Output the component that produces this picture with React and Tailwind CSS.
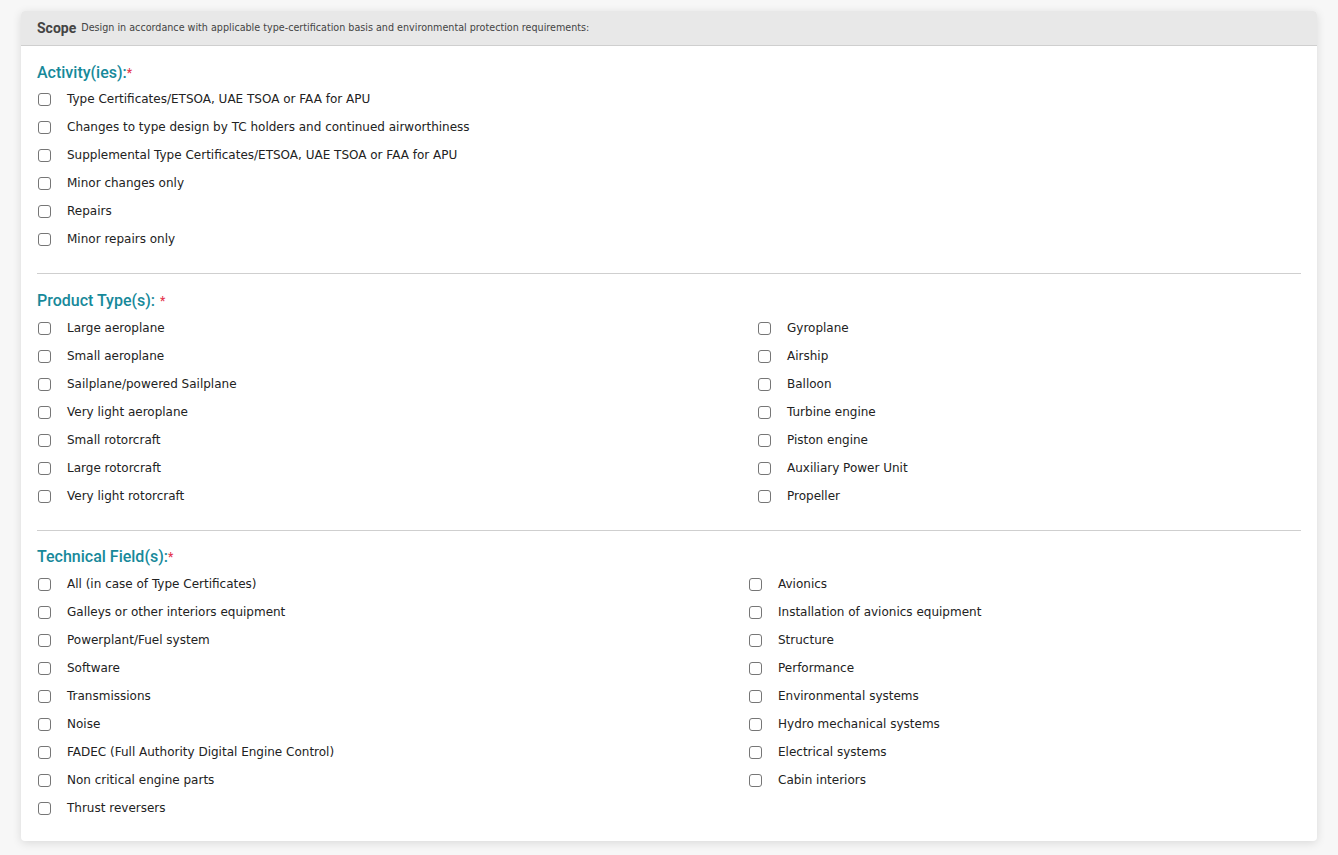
const activities = [
  "Type Certificates/ETSOA, UAE TSOA or FAA for APU",
  "Changes to type design by TC holders and continued airworthiness",
  "Supplemental Type Certificates/ETSOA, UAE TSOA or FAA for APU",
  "Minor changes only",
  "Repairs",
  "Minor repairs only",
];

const productLeft = [
  "Large aeroplane",
  "Small aeroplane",
  "Sailplane/powered Sailplane",
  "Very light aeroplane",
  "Small rotorcraft",
  "Large rotorcraft",
  "Very light rotorcraft",
];

const productRight = [
  "Gyroplane",
  "Airship",
  "Balloon",
  "Turbine engine",
  "Piston engine",
  "Auxiliary Power Unit",
  "Propeller",
];

const techLeft = [
  "All (in case of Type Certificates)",
  "Galleys or other interiors equipment",
  "Powerplant/Fuel system",
  "Software",
  "Transmissions",
  "Noise",
  "FADEC (Full Authority Digital Engine Control)",
  "Non critical engine parts",
  "Thrust reversers",
];

const techRight = [
  "Avionics",
  "Installation of avionics equipment",
  "Structure",
  "Performance",
  "Environmental systems",
  "Hydro mechanical systems",
  "Electrical systems",
  "Cabin interiors",
];

function Check({ label }) {
  return (
    <label className="flex items-center h-7 cursor-pointer">
      <span className="ml-[1px] w-[13px] h-[13px] border border-[#767676] rounded-[3px] bg-white shrink-0"></span>
      <span className="ml-[16px] text-[12px] text-[#222] font-['DejaVu_Sans',sans-serif]">
        {label}
      </span>
    </label>
  );
}

function Heading({ children, spaced }) {
  return (
    <h3 className="text-[16px] font-medium text-[#17899a] font-['Roboto',sans-serif] leading-none h-[14px] flex items-center">
      {children}
      <span className={"text-[#e53950] text-[12px] " + (spaced ? "ml-[5px]" : "")}>*</span>
    </h3>
  );
}

export default function App() {
  return (
    <div className="min-h-screen bg-[#f7f7f7] pt-[11px] px-[21px] font-['Roboto',sans-serif]">
      <div className="bg-white rounded-[4px] shadow-[0_2px_10px_rgba(0,0,0,0.12)] w-[1296px]">
        <div className="h-[35px] bg-[#e8e8e8] border-b border-[#cfcfcf] rounded-t-[4px] flex items-center px-4">
          <span className="text-[14px] font-bold text-[#444] font-['Roboto',sans-serif]">Scope</span>
          <span className="ml-[5px] text-[9.6px] text-[#444] font-['DejaVu_Sans',sans-serif] mt-[1px]">
            Design in accordance with applicable type-certification basis and environmental protection requirements:
          </span>
        </div>

        <div className="px-4 pb-[19px]">
          <div className="pt-[20px]">
            <Heading>Activity(ies):</Heading>
            <div className="mt-[5px]">
              {activities.map((a) => (
                <Check key={a} label={a} />
              ))}
            </div>
          </div>

          <div className="border-t border-[#cfcfcf] mt-[20px] pt-[20px]">
            <Heading spaced>Product Type(s):</Heading>
            <div className="mt-[6px] flex">
              <div className="w-[720px]">
                {productLeft.map((a) => (
                  <Check key={a} label={a} />
                ))}
              </div>
              <div>
                {productRight.map((a) => (
                  <Check key={a} label={a} />
                ))}
              </div>
            </div>
          </div>

          <div className="border-t border-[#cfcfcf] mt-[20px] pt-[19px]">
            <Heading>Technical Field(s):</Heading>
            <div className="mt-[6px] flex">
              <div className="w-[711px]">
                {techLeft.map((a) => (
                  <Check key={a} label={a} />
                ))}
              </div>
              <div>
                {techRight.map((a) => (
                  <Check key={a} label={a} />
                ))}
              </div>
            </div>
          </div>
        </div>
      </div>
    </div>
  );
}
